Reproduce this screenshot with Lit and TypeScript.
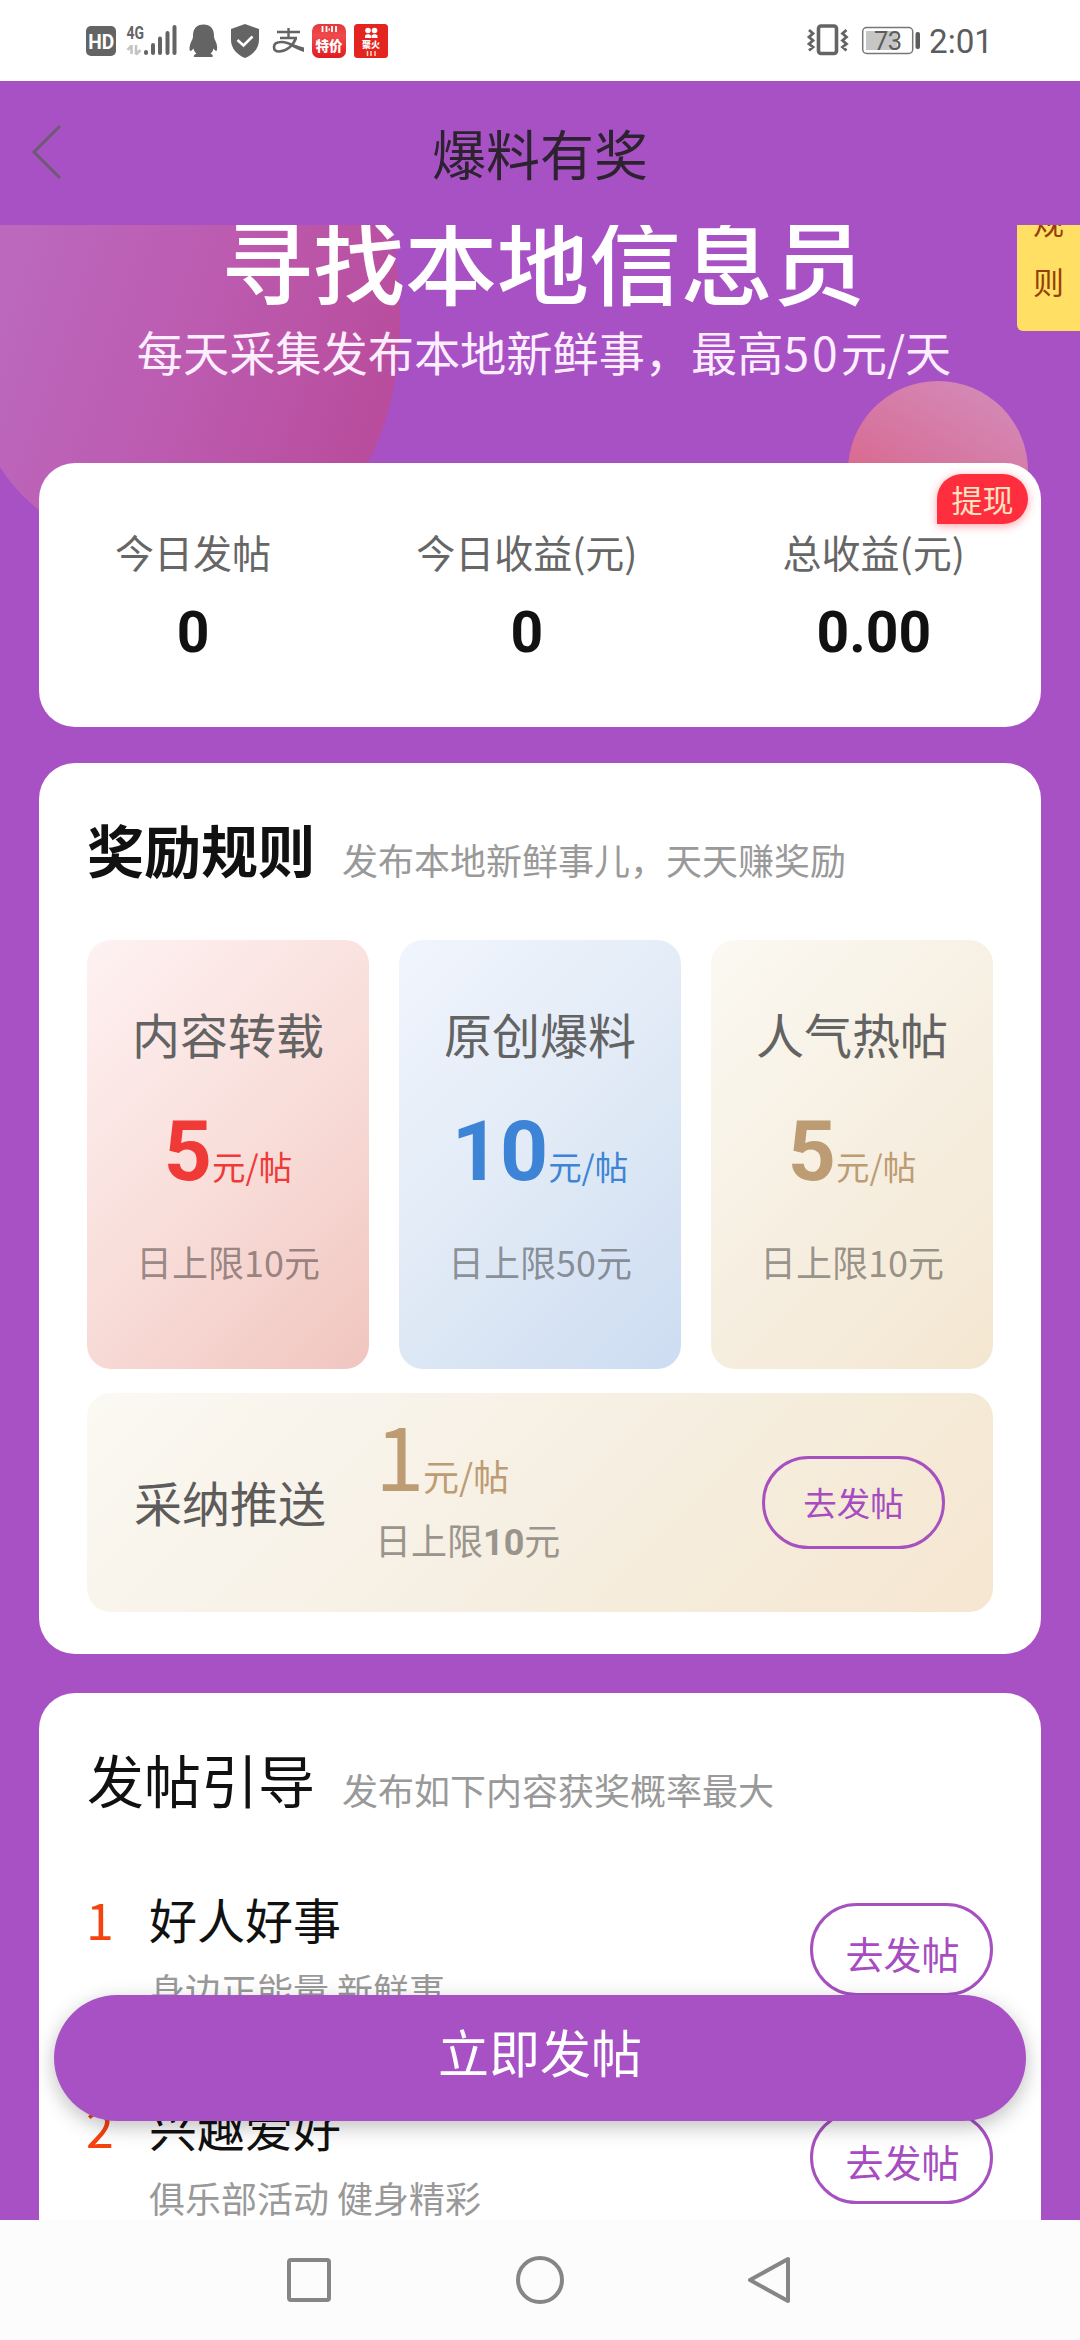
import { LitElement, html, css } from "lit";
import { customElement, property } from "lit/decorators.js";

const fontStack = css`"Noto Sans CJK SC", "Noto Sans", sans-serif`;

@customElement("status-bar")
class StatusBar extends LitElement {
  static styles = css`
    :host {
      display: flex;
      justify-content: space-between;
      height: 81px;
      box-sizing: border-box;
      padding: 20px 88px 0 80px;
      background: #fff;
      color: #646464;
    }
    svg {
      display: block;
      height: 42px;
    }
    .side {
      display: flex;
    }
    .roboto {
      font-family: Roboto, sans-serif;
    }
    .cjk {
      font-family: ${fontStack};
      font-weight: 900;
    }
  `;

  render() {
    return html`
      <div class="side">
        <svg width="320" height="42" viewBox="80 20 320 42" fill="#646464">
          <defs>
            <linearGradient id="app-red" x1="0" y1="0" x2="0" y2="1">
              <stop offset="0" stop-color="#e23a3c" />
              <stop offset="0.35" stop-color="#f04a4c" />
              <stop offset="1" stop-color="#e01b20" />
            </linearGradient>
          </defs>
          <rect x="86" y="26" width="30" height="30" rx="5" />
          <text class="roboto" x="101.300" y="48.500" font-size="21" font-weight="700" fill="#fff" text-anchor="middle" textLength="26" lengthAdjust="spacingAndGlyphs">HD</text>
          <text class="roboto" x="126.500" y="38.500" font-size="18.500" font-weight="700" textLength="17.500" lengthAdjust="spacingAndGlyphs">4G</text>
          <path d="M131.500 54V45M127.500 50L131.500 45.500M136 45V54.500M140.500 50L136 54.500" fill="none" stroke="#c4c4c4" stroke-width="2.600" />
          <path d="M146 52V53M153 45V53M160 38.500V53M167.500 33V53M174.500 27V53" fill="none" stroke="#646464" stroke-width="4" stroke-linecap="round" />
          <path d="M203.500 24.500C210.500 24.500 214 29 214 35.500C214 38 214.500 39 215.500 41C217.500 45 217.500 49 216.500 51C215.500 51.500 214.500 49.500 213.500 48.500C213 51 212 52.500 210.500 53.500C213 54.500 213.500 56.500 212 57H194.500C193 56.500 194 54.500 196.500 53.500C195 52.500 194 51 193.500 48.500C192.500 49.500 191.500 51.500 190 51C189 49 189.500 45 191.500 41C192.500 39 193 38 193 35.500C193 29 196.500 24.500 203.500 24.500Z" />
          <path d="M245 24L259 29V40C259 48 253 55 245 58C237 55 231 48 231 40V29Z" />
          <path d="M237.500 40L243.500 45.500L252.500 36.500" fill="none" stroke="#fff" stroke-width="2.600" />
          <path d="M277 32H300M288.500 28V38M280 38H297" fill="none" stroke="#646464" stroke-width="2.400" />
          <path d="M296 38C293 46 286 51.500 279 51.500C275.500 51.500 274 49.500 274 47C274 43.500 277.500 42 281.500 42C287 42 292 44.500 297 47" fill="none" stroke="#646464" stroke-width="2.600" />
          <path d="M290 43.500L304 47.500V52C299 50.500 295 48.500 289.500 45.500Z" />
          <rect x="312" y="24" width="34" height="34" rx="7" fill="url(#app-red)" />
          <path d="M322.500 26V32M326.500 26V32M332 26V32M336 26V32M328.500 29.500H330" stroke="#fff" stroke-width="1.800" fill="none" />
          <text class="cjk" x="329" y="50.500" font-size="13.500" fill="#fff" text-anchor="middle">特价</text>
          <rect x="354" y="24" width="34" height="34" rx="3.500" fill="#e3241f" />
          <g fill="#fff">
            <circle cx="368" cy="30.500" r="2.800" />
            <circle cx="374.500" cy="30.500" r="2.800" />
            <path d="M365 36C365 33.500 371 33.500 371 36V38H365ZM371.500 36C371.500 33.500 377.500 33.500 377.500 36V38H371.500Z" />
            <text class="cjk" x="371" y="47.500" font-size="9" text-anchor="middle">聚火</text>
          </g>
          <path d="M367.500 51V56M371 51V56M375 51V56" stroke="#ffd2c8" stroke-width="1.500" />
        </svg>
      </div>
      <div class="side">
        <svg width="192" height="42" viewBox="800 20 192 42" fill="#5c5c5c">
          <rect x="818.500" y="26" width="18" height="27.500" rx="2.500" fill="none" stroke="#646464" stroke-width="3.600" />
          <path d="M809 30L813 33.500L809 37L813 40.500L809 44L813 47L809 50.500M846.500 30L842.500 33.500L846.500 37L842.500 40.500L846.500 44L842.500 47L846.500 50.500" fill="none" stroke="#646464" stroke-width="2.800" />
          <rect x="862.700" y="27.500" width="50" height="26" rx="4" fill="none" stroke="#777" stroke-width="1.500" />
          <rect x="866" y="31" width="31" height="19" fill="#c6c6c6" />
          <rect x="915.500" y="32" width="4.500" height="17" rx="2" />
          <text class="roboto" x="874" y="49.500" font-size="25.500" textLength="28">73</text>
          <text class="roboto" x="929" y="53" font-size="34" textLength="64" lengthAdjust="spacingAndGlyphs">2:01</text>
        </svg>
      </div>
    `;
  }
}

@customElement("post-button")
class PostButton extends LitElement {
  static styles = css`
    :host {
      display: flex;
      align-items: center;
      justify-content: center;
      flex: none;
      box-sizing: border-box;
      width: 183px;
      height: 93px;
      padding-bottom: 1px;
      border: 3px solid #a651bf;
      border-radius: 47px;
      color: #a64cc0;
      font: 33.500px/50px ${fontStack};
    }
    :host([large]) {
      font-size: 38px;
      padding: 6px 0 0 2px;
    }
  `;
  render() {
    return html`去发帖`;
  }
}

@customElement("reward-tile")
class RewardTile extends LitElement {
  static styles = css`
    :host {
      display: flex;
      flex-direction: column;
      align-items: center;
      box-sizing: border-box;
      height: 429px;
      padding-top: 63px;
      border-radius: 24px;
      font-family: ${fontStack};
    }
    :host([tone="red"]) {
      background: linear-gradient(135deg, #fef2f2, #f8dcd8 55%, #f1c5bf);
      --accent: #f03a37;
    }
    :host([tone="blue"]) {
      background: linear-gradient(135deg, #f1f5fd, #dfe9f5 55%, #cddcf2);
      --accent: #3d84d6;
    }
    :host([tone="gold"]) {
      background: linear-gradient(135deg, #fbf9f2, #f6eee0 55%, #f4e7d1);
      --accent: #bd9c74;
    }
    .name {
      font-size: 48px;
      line-height: 60px;
      color: #636363;
    }
    .price {
      display: flex;
      align-items: baseline;
      height: 84px;
      margin-top: 47px;
      color: var(--accent);
    }
    .amount {
      font: 700 84px/84px Roboto, sans-serif;
    }
    .unit {
      font-size: 33.500px;
      line-height: 40px;
    }
    .limit {
      margin-top: 42px;
      font-size: 36px;
      line-height: 50px;
      color: rgba(0, 0, 0, 0.4);
    }
  `;
  @property() name = "";
  @property() amount = "";
  @property() limit = "";
  render() {
    return html`
      <div class="name">${this.name}</div>
      <div class="price"><span class="amount">${this.amount}</span><span class="unit">元/帖</span></div>
      <div class="limit">日上限${this.limit}元</div>
    `;
  }
}

@customElement("app-root")
class AppRoot extends LitElement {
  static styles = css`
    :host {
      display: flex;
      flex-direction: column;
      width: 1080px;
      height: 2340px;
      overflow: hidden;
      background: #a851c5;
      font-family: ${fontStack};
      color: #111;
      white-space: nowrap;
    }
    .header {
      display: flex;
      align-items: center;
      flex: none;
      height: 144px;
      padding: 0 30px;
    }
    .header svg {
      width: 32px;
      height: 56px;
      margin-bottom: 3px;
    }
    .header-title {
      flex: 1;
      padding-right: 32px;
      text-align: center;
      font-size: 54px;
      line-height: 80px;
      color: #2c2230;
    }
    .page {
      position: relative;
      flex: none;
      height: 1995px;
      overflow: hidden;
    }
    .bubble {
      position: absolute;
    }
    .bubble-left {
      left: 0;
      top: 0;
      width: 402px;
      height: 300px;
    }
    .bubble-right {
      left: 848px;
      top: 156px;
      width: 180px;
      height: 180px;
      border-radius: 50%;
      background: linear-gradient(30deg, #e0607c 15%, #d6749e 50%, #d48cba 95%);
    }
    .tab {
      position: absolute;
      right: 0;
      top: -60px;
      width: 63px;
      height: 166px;
      box-sizing: border-box;
      padding-top: 26px;
      border-radius: 6px 0 0 6px;
      background: #ffe065;
      color: #963f08;
      text-align: center;
      font-size: 31px;
      line-height: 60px;
    }
    .tab span {
      display: block;
    }
    .hero {
      position: relative;
      height: 238px;
      display: flex;
      flex-direction: column;
      align-items: center;
      color: #fff;
    }
    .hero-title {
      margin-top: -17px;
      padding-left: 6px;
      font-size: 92px;
      font-weight: 500;
      line-height: 100px;
    }
    .hero-text {
      margin-top: 13px;
      padding-left: 8px;
      font-size: 46.200px;
      line-height: 60px;
      color: #fdeeff;
    }
    .hero-num {
      letter-spacing: 3px;
    }
    .card {
      position: relative;
      box-sizing: border-box;
      margin: 0 39px;
      padding: 50px 48px 0;
      border-radius: 36px;
      background: #fff;
    }
    .stats {
      display: flex;
      justify-content: space-between;
      height: 264px;
      padding: 63px 76px 0;
    }
    .stat {
      display: flex;
      flex-direction: column;
      align-items: center;
      gap: 27px;
    }
    .stat-label {
      font-size: 39px;
      line-height: 50px;
      color: #666;
    }
    .stat-value {
      font: 700 57px/60px Roboto, sans-serif;
    }
    .badge {
      position: absolute;
      right: 13px;
      top: 11px;
      width: 91px;
      height: 50px;
      border-radius: 26px 26px 26px 0;
      background: #ff2e3f;
      box-shadow: 0 2px 10px rgba(255, 46, 63, 0.45);
      color: #ffe2c0;
      text-align: center;
      font-size: 31px;
      line-height: 49px;
    }
    .rules {
      margin-top: 36px;
      height: 891px;
    }
    .guide {
      margin-top: 39px;
      height: 700px;
    }
    .head {
      display: flex;
      align-items: flex-start;
      gap: 27px;
      height: 70px;
    }
    .head-title {
      font-size: 57px;
      line-height: 71px;
    }
    .bold {
      font-weight: 700;
    }
    .head-note {
      padding-top: 21px;
      font-size: 36px;
      line-height: 50px;
      color: #999;
    }
    .tiles {
      display: grid;
      grid-template-columns: repeat(3, 1fr);
      gap: 30px;
      margin-top: 57px;
    }
    .banner {
      display: flex;
      align-items: center;
      box-sizing: border-box;
      height: 219px;
      margin-top: 24px;
      padding: 0 48px 0 47px;
      border-radius: 24px;
      background: linear-gradient(135deg, #fbf9f3, #f6efe3 50%, #f5ebd8 75%, #f6e6d1);
    }
    .banner-name {
      padding-bottom: 4px;
      font-size: 48px;
      line-height: 60px;
      color: #5e5c5a;
    }
    .banner-info {
      flex: 1;
      align-self: flex-start;
      padding: 16px 0 0 49px;
    }
    .banner-price {
      display: flex;
      align-items: baseline;
      height: 90px;
      font-size: 36px;
      line-height: 50px;
      color: #bd9c74;
    }
    .banner-amount {
      font-size: 89px;
      line-height: 87px;
      width: 48px;
    }
    .banner-limit {
      margin-top: 15px;
      font-size: 36px;
      line-height: 50px;
      color: #99948c;
    }
    .banner-limit b {
      font-family: Roboto, sans-serif;
    }
    .list {
      margin-top: 75px;
    }
    .item {
      display: flex;
      height: 208px;
    }
    .item-index {
      width: 63px;
      margin-left: -1px;
      font-size: 50px;
      line-height: 60px;
      color: #f5430f;
    }
    .item-body {
      flex: 1;
    }
    .item-title {
      font-size: 48px;
      line-height: 60px;
    }
    .item-note {
      margin-top: 16px;
      font-size: 36px;
      line-height: 50px;
      color: #999;
    }
    .item post-button {
      margin-top: 15px;
    }
    .submit {
      position: absolute;
      left: 54px;
      right: 54px;
      bottom: 99px;
      height: 126px;
      border-radius: 63px;
      background: #a851c5;
      box-shadow: 0 6px 20px rgba(0, 0, 0, 0.25);
      color: #fff;
      text-align: center;
      font-size: 51px;
      line-height: 112px;
    }
    .nav {
      flex: none;
      height: 120px;
      background: #fcfcfc;
    }
    .nav svg {
      display: block;
    }
  `;

  private stats = [
    ["今日发帖", "0"],
    ["今日收益(元)", "0"],
    ["总收益(元)", "0.00"],
  ];

  private tiles = [
    { tone: "red", name: "内容转载", amount: "5", limit: "10" },
    { tone: "blue", name: "原创爆料", amount: "10", limit: "50" },
    { tone: "gold", name: "人气热帖", amount: "5", limit: "10" },
  ];

  private guides = [
    ["好人好事", "身边正能量 新鲜事"],
    ["兴趣爱好", "俱乐部活动 健身精彩"],
  ];

  render() {
    return html`
      <status-bar></status-bar>
      <div class="header">
        <svg viewBox="0 0 32 56"><path d="M30 2L4 28L30 54" fill="none" stroke="#6e5a72" stroke-width="3" /></svg>
        <div class="header-title">爆料有奖</div>
      </div>
      <div class="page">
        <svg class="bubble bubble-left" viewBox="0 0 402 300">
          <defs>
            <linearGradient id="bubble" x1="0" y1="0.25" x2="1" y2="0.5">
              <stop offset="0" stop-color="#bb68bd" />
              <stop offset="0.5" stop-color="#bc5bb0" />
              <stop offset="1" stop-color="#b94c9c" />
            </linearGradient>
          </defs>
          <path d="M0 0H389C397 30 401 62 400 98C399 150 390 196 367 240L320 300H60C34 284 14 264 0 242Z" fill="url(#bubble)" />
        </svg>
        <div class="bubble bubble-right"></div>
        <div class="tab"><span>规</span><span>则</span></div>
        <div class="hero">
          <div class="hero-title">寻找本地信息员</div>
          <div class="hero-text">每天采集发布本地新鲜事，最高<span class="hero-num">50</span>元/天</div>
        </div>

        <div class="card stats">
          ${this.stats.map(
            ([label, value]) => html`<div class="stat">
              <div class="stat-label">${label}</div>
              <div class="stat-value">${value}</div>
            </div>`
          )}
          <div class="badge">提现</div>
        </div>

        <div class="card rules">
          <div class="head">
            <div class="head-title bold">奖励规则</div>
            <div class="head-note">发布本地新鲜事儿，天天赚奖励</div>
          </div>
          <div class="tiles">
            ${this.tiles.map(
              (t) => html`<reward-tile tone=${t.tone} .name=${t.name} .amount=${t.amount} .limit=${t.limit}></reward-tile>`
            )}
          </div>
          <div class="banner">
            <div class="banner-name">采纳推送</div>
            <div class="banner-info">
              <div class="banner-price"><span class="banner-amount">1</span>元/帖</div>
              <div class="banner-limit">日上限<b>10</b>元</div>
            </div>
            <post-button></post-button>
          </div>
        </div>

        <div class="card guide">
          <div class="head">
            <div class="head-title">发帖引导</div>
            <div class="head-note">发布如下内容获奖概率最大</div>
          </div>
          <div class="list">
            ${this.guides.map(
              ([title, note], i) => html`<div class="item">
                <div class="item-index">${i + 1}</div>
                <div class="item-body">
                  <div class="item-title">${title}</div>
                  <div class="item-note">${note}</div>
                </div>
                <post-button large></post-button>
              </div>`
            )}
          </div>
        </div>

        <div class="submit">立即发帖</div>
      </div>
      <div class="nav">
        <svg width="1080" height="120" viewBox="0 2220 1080 120" fill="none" stroke="#868686" stroke-width="4">
          <rect x="289" y="2260" width="40" height="40" rx="2" />
          <circle cx="540" cy="2280" r="22" />
          <path d="M788 2259V2301L750 2280Z" stroke-linejoin="round" />
        </svg>
      </div>
    `;
  }
}
